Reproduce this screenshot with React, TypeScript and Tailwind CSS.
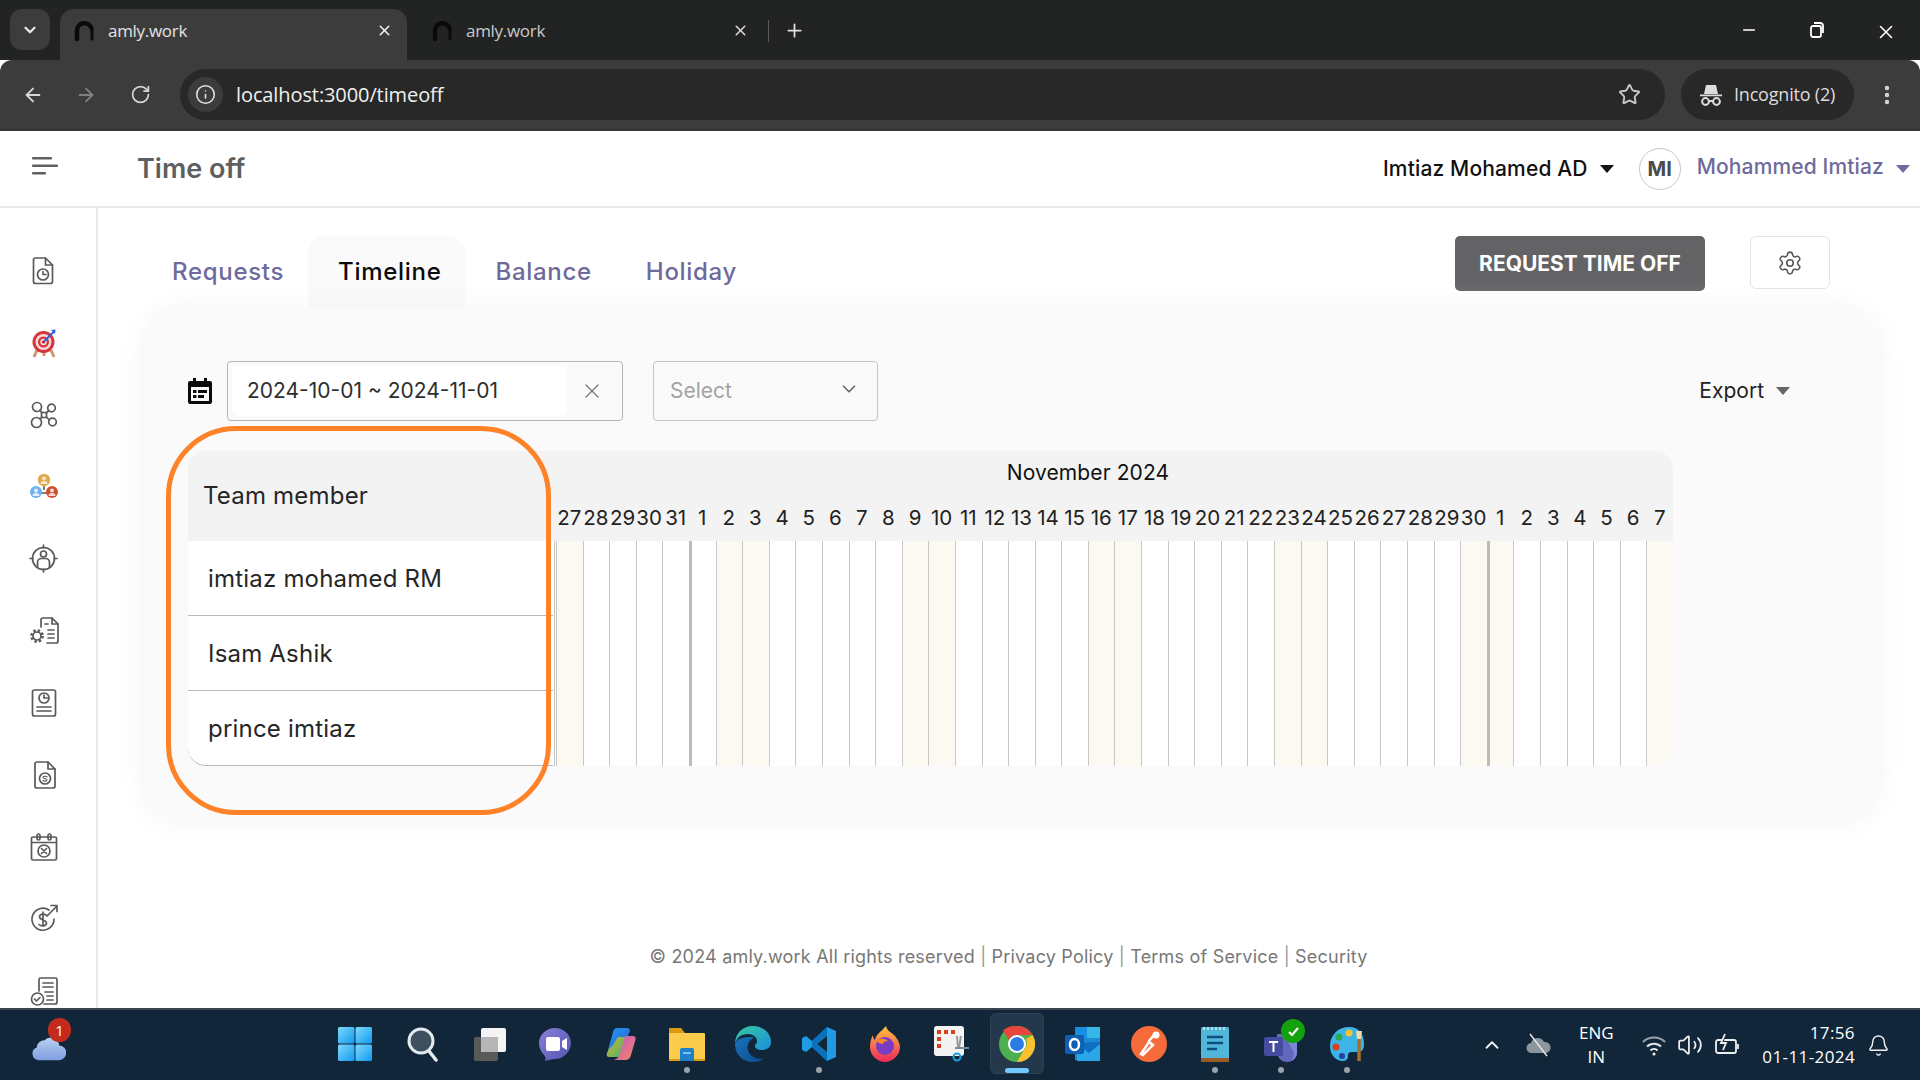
import React from "react";
import { ArrowLeft, ArrowRight, RotateCw, Info, Star, EllipsisVertical, Minus, X, Plus, ChevronDown, ChevronUp, Settings, Bell, Volume2 } from "lucide-react";

const Favicon = () => (
  <svg width="24" height="24" viewBox="0 0 24 24" fill="none">
    <path d="M5 20V11.500a7.500 7.500 0 0 1 14.500-2.500" stroke="#0a0a0a" strokeWidth="4.500" strokeLinecap="round" />
    <path d="M20 10v10" stroke="#0a0a0a" strokeWidth="3" strokeLinecap="round" />
  </svg>
);

const Ic = ({ children }: { children: React.ReactNode }) => (
  <svg width="34" height="34" viewBox="0 0 34 34" fill="none" stroke="#5a5a5a" strokeWidth="1.7" strokeLinecap="round" strokeLinejoin="round" className="shrink-0">
    {children}
  </svg>
);

const sidebarIcons = [
  <Ic key="a"><path d="M8.500 4h10l7 7v16.500a2 2 0 0 1-2 2h-15a2 2 0 0 1-2-2V6a2 2 0 0 1 2-2z" /><path d="M18.500 4v7h7" /><circle cx="16" cy="20.500" r="5.500" /><path d="M16 17.500v3h3" /></Ic>,
  <svg key="b" width="34" height="34" viewBox="0 0 34 34" fill="none" className="shrink-0">
    <path d="M10 24l-3 7M24 24l3 7M17 25v5" stroke="#c99a72" strokeWidth="3" />
    <circle cx="16.500" cy="16" r="11" fill="#d8353a" />
    <circle cx="16.500" cy="16" r="8" fill="#f5dcdc" />
    <circle cx="16.500" cy="16" r="5.500" fill="#d8353a" />
    <circle cx="16.500" cy="16" r="3.200" fill="#f5dcdc" />
    <circle cx="16.500" cy="16" r="1.500" fill="#c21d2a" />
    <path d="M17 15.500L27 5.500" stroke="#2e5fd8" strokeWidth="2" />
    <path d="M24 4l4.500-.500L28 8z" fill="#2e5fd8" />
  </svg>,
  <Ic key="c"><circle cx="10" cy="9" r="4.500" /><circle cx="24.500" cy="10" r="3.800" /><circle cx="9.500" cy="24.500" r="5" /><circle cx="25.500" cy="24" r="3.800" /><rect x="14.500" y="14.500" width="5" height="5" /><path d="M13 12l2 3M22 12.500l-3 2.500M13 21l2-2M22.500 22l-3-3" /></Ic>,
  <svg key="d" width="34" height="34" viewBox="0 0 34 34" fill="none" className="shrink-0">
    <path d="M17 14v6M9 23h16" stroke="#555" strokeWidth="1.500" />
    <circle cx="17" cy="10" r="6.200" fill="#e2a94e" />
    <circle cx="9" cy="22" r="6" fill="#6eb4ee" />
    <circle cx="25" cy="22" r="6" fill="#cf5030" />
    <circle cx="17" cy="8.500" r="2" fill="#f3e6cf" /><path d="M13.500 14a3.500 3 0 0 1 7 0z" fill="#f3e6cf" />
    <circle cx="9" cy="20.500" r="2" fill="#e5f0fa" /><path d="M5.500 26a3.500 3 0 0 1 7 0z" fill="#e5f0fa" />
    <circle cx="25" cy="20.500" r="2" fill="#f3dcd4" /><path d="M21.500 26a3.500 3 0 0 1 7 0z" fill="#f3dcd4" />
  </svg>,
  <Ic key="e"><circle cx="16.500" cy="16.500" r="11" /><path d="M16.500 3v3M16.500 27v3M3 16.500h3M27 16.500h3" /><circle cx="16.500" cy="12" r="3" /><path d="M10.500 25v-4.500a4 4 0 0 1 4-4h4a4 4 0 0 1 4 4V25" /></Ic>,
  <Ic key="f"><path d="M14 13V6a2 2 0 0 1 2-2h9l6 6v17a2 2 0 0 1-2 2h-9" /><path d="M25 4v6h6M18 10h3M21 16h6M21 20h6M21 24h6" /><circle cx="10" cy="22" r="4" /><circle cx="10" cy="22" r="5.600" strokeWidth="2.600" strokeDasharray="2.400 2" strokeLinecap="butt" /></Ic>,
  <Ic key="g"><rect x="5.500" y="4" width="23" height="26" rx="2" /><circle cx="17" cy="12" r="5" /><path d="M17 12V9M17 12h3.500M10 21h14M10 25h14" /></Ic>,
  <Ic key="h"><path d="M10 4h11l7 7v17a2 2 0 0 1-2 2H10a2 2 0 0 1-2-2V6a2 2 0 0 1 2-2z" /><path d="M21 4v7h7" /><circle cx="18" cy="20.500" r="5.500" /><path d="M20 18.800c-1-.800-4-.800-4 .7s4 .9 4 2.400-3 1.500-4 .6" strokeWidth="1.100" /></Ic>,
  <Ic key="i"><rect x="4.500" y="7" width="25" height="23" rx="1.500" /><path d="M4.500 12.500h25" /><rect x="10" y="4" width="3" height="6" rx="1.500" /><rect x="21" y="4" width="3" height="6" rx="1.500" /><circle cx="17" cy="21" r="6" /><path d="M14.500 18.500l5 5M19.500 18.500l-5 5" /></Ic>,
  <Ic key="j"><path d="M22 8a11 11 0 1 0 5 9" /><path d="M20 14L30 4M24 3.500h6v6" /><path d="M19.500 13.500c-1.500-2-7-2-7 1.500s7 2.500 7 6-5.500 3.500-7.500 1.500M16 10v14" /></Ic>,
  <Ic key="k"><path d="M12 17V5.500a1.500 1.500 0 0 1 1.500-1.500h15A1.500 1.500 0 0 1 30 5.500V28a2 2 0 0 1-2 2H17" /><path d="M16 9h10M16 13h10M18 18h8M20 22h6M20 26h6" /><circle cx="10.500" cy="25" r="6" /><path d="M7.500 25l2 2 3.500-3.500" /></Ic>,
];

const Grad = ({ id, a, b, x2 = 1, y2 = 1 }: { id: string; a: string; b: string; x2?: number; y2?: number }) => (
  <defs>
    <linearGradient id={id} x1="0" y1="0" x2={x2} y2={y2}>
      <stop offset="0" stopColor={a} />
      <stop offset="1" stopColor={b} />
    </linearGradient>
  </defs>
);

const Ti = ({ children }: { children: React.ReactNode }) => (
  <svg width="36" height="36" viewBox="0 0 36 36" fill="none">{children}</svg>
);

type Task = { icon: React.ReactNode; dot?: boolean; active?: boolean; badge?: boolean };

const tasks: Task[] = [
  { icon: <Ti><Grad id="w" a="#7fd8fb" b="#0f9af0" /><rect x="1" y="1" width="16.500" height="16.500" rx="1.500" fill="url(#w)" /><rect x="18.500" y="1" width="16.500" height="16.500" rx="1.500" fill="url(#w)" /><rect x="1" y="18.500" width="16.500" height="16.500" rx="1.500" fill="url(#w)" /><rect x="18.500" y="18.500" width="16.500" height="16.500" rx="1.500" fill="url(#w)" /></Ti> },
  { icon: <Ti><circle cx="16" cy="15" r="12" fill="#3c5060" stroke="#e4e9ec" strokeWidth="3" /><path d="M24 25l7 9" stroke="#e4e9ec" strokeWidth="3.500" strokeLinecap="round" /></Ti> },
  { icon: <Ti><rect x="3" y="11" width="24" height="24" rx="2" fill="#5a5a5a" /><rect x="10" y="2" width="25" height="24" rx="2" fill="#f4f4f4" /><rect x="10" y="11" width="17" height="15" fill="#b6b6b6" /></Ti> },
  { icon: <Ti><Grad id="m" a="#8b7fd6" b="#4f56b5" /><path d="M18 2c9 0 16 7 16 15s-7 16-16 16c-3 0-7 1-10 2 1-3 .5-4-1-6-3-3-5-7-5-12C2 9 9 2 18 2z" fill="url(#m)" /><rect x="9" y="11" width="14" height="14" rx="2" fill="#fff" /><path d="M25 15l5-3v12l-5-3z" fill="#fff" /></Ti> },
  { icon: <Ti><Grad id="c1" a="#1a9ae8" b="#3b5fe0" /><Grad id="c2" a="#f2b21e" b="#36b37e" /><Grad id="c3" a="#c24fd6" b="#f58a5a" /><path d="M14 2h9c2 0 3 2 2.500 3.500L20 27c-.5 2-2 4-5 4H6c-2 0-3-2-2-4z" fill="url(#c2)" /><path d="M14 2h10c2 0 3 1 3 3l-3 6h-9l-5 8-5 5 5-18c.5-2 2-4 4-4z" fill="url(#c1)" /><path d="M24 10h6c2 0 3 1.500 2.500 3.500L28 29c-.5 3-3 5-6 5H11c3-1 5-3 6-6l4-14c.5-2 1.500-4 3-4z" fill="url(#c3)" /></Ti> },
  { dot: true, icon: <Ti><path d="M0 3a1 1 0 0 1 1-1h11l4 5h19v4H0z" fill="#d99a10" /><rect x="0" y="7" width="36" height="28" rx="1" fill="#fbcb4c" /><path d="M0 33h36v2H0z" fill="#d99a10" /><path d="M11 35V24a2 2 0 0 1 2-2h10a2 2 0 0 1 2 2v11z" fill="#1d80c8" /><path d="M14 27h8" stroke="#a9d6f5" strokeWidth="1.500" /></Ti> },
  { icon: <Ti><Grad id="e1" a="#35c9a0" b="#1a8fdc" /><Grad id="e2" a="#1773bd" b="#0d4a8c" /><path d="M18 0c10 0 18 7 18 16 0 6-5 8-9 8-5 0-7-2-7-4 0-2 2-2 2-5 0-4-4-7-9-7C6 8 1 12 0 18 0 8 7 0 18 0z" fill="url(#e1)" /><path d="M0 18c0 10 7 18 18 18 4 0 8-1 11-4-2 1-5 1-7 .5-6-1.500-10-6.500-9.500-12 .3-4 3-7 6.500-9-1-.3-2-.5-3.500-.5C7 11 1 13 0 18z" fill="url(#e2)" /></Ti> },
  { dot: true, icon: <Ti><path d="M26 1l9 4v26l-9 4L11 21l-6 5-4-2V12l4-2 6 5z" fill="#1f9be3" /><path d="M26 1v34L11 21v-6zM26 10L15.500 18 26 26z" fill="#0a72bd" /><path d="M26 10v16l-10-8z" fill="#12263a" /></Ti> },
  { icon: <Ti><Grad id="f1" a="#ffc23d" b="#f0285a" x2={0} /><path d="M19 0c1 5 5 6 8 9 4 4 6 9 6 12 0 8-7 15-15 15S3 29 3 21c0-4 1-9 3-12 0 3 1 4 2 5 1-6 6-8 11-14z" fill="url(#f1)" /><circle cx="18" cy="20" r="9" fill="#7b3cc4" /><path d="M10 15c3-3 8-3 11 0-3 0-5 1-5 3-3 0-4-1-6-3z" fill="#f58a2a" /></Ti> },
  { icon: <Ti><rect x="1" y="0" width="30" height="30" rx="3" fill="#f3f3f3" /><path d="M4 4h4v4H4zM11 4h4v4h-4zM18 4h4v4h-4zM4 11h4v4H4zM4 18h4v4H4z" fill="#d8401f" /><path d="M24 10l1 12M28 10l-2 12" stroke="#9a9a9a" strokeWidth="2" /><circle cx="24" cy="31" r="3.500" stroke="#1aa0e0" strokeWidth="2" /><path d="M22 22h15" stroke="#7a8a96" strokeWidth="2" /></Ti> },
  { active: true, icon: <Ti><circle cx="18" cy="18" r="18" fill="#4caf50" /><path d="M18 0a18 18 0 0 1 15.600 9H18a9 9 0 0 0-8 5L4 4.500A18 18 0 0 1 18 0z" fill="#e8453c" /><path d="M33.600 9A18 18 0 0 1 18 36l7.800-13.500A9 9 0 0 0 27 13z" fill="#fbc02d" /><circle cx="18" cy="18" r="9" fill="#fff" /><circle cx="18" cy="18" r="7" fill="#2c7be5" /></Ti> },
  { icon: <Ti><path d="M10 1h24a1 1 0 0 1 1 1v32H10z" fill="#1d8ad6" /><path d="M22 1h13v11H22z" fill="#35b8e8" /><path d="M10 1h12v11H10z" fill="#1490df" /><path d="M12 17l23-1v19H12z" fill="#0f6fc0" /><path d="M12 18l12 9 11-9v17H12z" fill="#28a8ea" /><rect x="0" y="9" width="19" height="19" rx="2" fill="#0f5fb5" /><ellipse cx="9.500" cy="18.500" rx="4.500" ry="5.500" stroke="#fff" strokeWidth="2.500" /></Ti> },
  { icon: <Ti><circle cx="18" cy="18" r="18" fill="#f56b39" /><path d="M10 28l8-12 4 3-10 10zM18 15l5-6" stroke="#fff" strokeWidth="2.500" strokeLinecap="round" /><circle cx="25" cy="9" r="3.500" fill="#fff" /></Ti> },
  { dot: true, icon: <Ti><rect x="4" y="1" width="28" height="33" rx="1.500" fill="#52b6d8" /><path d="M4 32h28v4H4z" fill="#9a5a2a" /><path d="M7 1v3M11 1v3M15 1v3M19 1v3M23 1v3M27 1v3" stroke="#c9eef9" strokeWidth="1.500" /><path d="M10 11h16M10 17h16M10 23h10" stroke="#0d4f78" strokeWidth="2.400" /></Ti> },
  { dot: true, badge: true, icon: <Ti><circle cx="25" cy="6" r="5" fill="#6a70c8" /><path d="M14 8h16c3 0 4 2 4 4v14c0 5-4 10-10 10s-10-5-10-10z" fill="#6268bc" /><path d="M20 8h10a4 4 0 0 1 4 4v14c0 5-3 8-6 9 3-3 3-6 3-9z" fill="#7f85d8" /><rect x="1" y="11" width="19" height="19" rx="2" fill="#454b9e" /><path d="M6 16h9M10.500 16v10" stroke="#fff" strokeWidth="2" /></Ti> },
  { dot: true, icon: <Ti><path d="M20 1C9 1 1 9 1 20c0 9 6 15 13 15 4 0 5-3 5-5 0-3 1-4 4-4h6c5 0 6-4 6-8C35 8 30 1 20 1z" fill="#3cb4e8" /><circle cx="20" cy="7" r="3.500" fill="#f4c430" /><circle cx="10" cy="11" r="3.500" fill="#2fa84f" /><circle cx="7" cy="21" r="3.500" fill="#d8401f" /><circle cx="13" cy="30" r="3" fill="#2c3e9e" /><path d="M30 12v23" stroke="#a5702a" strokeWidth="3.500" /><path d="M27 5h6l-1 8h-4z" fill="#ecdcae" /></Ti> },
];

const days = [27, 28, 29, 30, 31, ...Array.from({ length: 30 }, (_, i) => i + 1), 1, 2, 3, 4, 5, 6, 7];
const members = ["imtiaz mohamed RM", "Isam Ashik", "prince imtiaz"];

const Caret = ({ className }: { className: string }) => (
  <span className={`inline-block w-0 h-0 border-l-[7px] border-r-[7px] border-t-[8px] border-l-transparent border-r-transparent ${className}`} />
);

export default function App() {
  return (
    <div className="w-[1920px] h-[1080px] overflow-hidden flex flex-col bg-white font-['Inter',sans-serif]">
      {/* tab strip */}
      <div className="h-[60px] shrink-0 bg-[#222423] flex items-end pl-[10px] text-[#e3e3e3] font-['Open_Sans',sans-serif] text-[17px]">
        <div className="w-[40px] h-[41px] mb-[10px] rounded-xl bg-[#3c3c3c] flex items-center justify-center">
          <ChevronDown size={18} strokeWidth={3} color="#e8e8e8" />
        </div>
        <div className="ml-[10px] w-[347px] h-[51px] pb-[8px] bg-[#3c3c3c] rounded-t-[14px] flex items-center pl-[12px] pr-[14px]">
          <Favicon />
          <span className="ml-[12px] flex-1 tracking-[-0.3px]">amly.work</span>
          <X size={17} strokeWidth={2.200} color="#f0f0f0" />
        </div>
        <div className="w-[361px] h-[51px] pb-[8px] flex items-center pl-[23px] pr-[19px] text-[#c9c9c9]">
          <Favicon />
          <span className="ml-[12px] flex-1 tracking-[-0.3px]">amly.work</span>
          <X size={17} strokeWidth={2.200} color="#d8d8d8" />
        </div>
        <div className="h-[51px] pb-[8px] flex items-center">
          <div className="w-px h-[22px] bg-[#5a5a5a]" />
          <Plus size={21} strokeWidth={2} color="#e0e0e0" className="ml-[15px]" />
        </div>
        <div className="ml-auto h-full flex items-start pt-[21px]">
          <div className="w-[68px] flex justify-center pr-[2px]"><Minus size={18} color="#fff" strokeWidth={2.200} /></div>
          <div className="w-[68px] flex justify-center pr-[2px]">
            <svg width="18" height="18" viewBox="0 0 18 18" fill="none" stroke="#fff" strokeWidth="1.800"><rect x="3" y="5" width="10" height="11" rx="2" /><path d="M6 2h6a3 3 0 0 1 3 3v7" /></svg>
          </div>
          <div className="w-[68px] flex justify-center"><X size={22} color="#fff" strokeWidth={1.700} /></div>
        </div>
      </div>
      {/* toolbar */}
      <div className="h-[71px] shrink-0 bg-[#3c3c3c] border-b-2 border-[#343434] rounded-tl-xl rounded-tr-xl flex items-center pl-[22px] pr-[18px] font-['Open_Sans',sans-serif]">
        <ArrowLeft size={22} color="#d6d6d6" strokeWidth={2} />
        <ArrowRight size={22} color="#808080" strokeWidth={2} className="ml-[31px]" />
        <RotateCw size={21} color="#d6d6d6" strokeWidth={2} className="ml-[33px]" />
        <div className="ml-[29px] w-[1485px] h-[51px] rounded-full bg-[#282828] flex items-center pl-[8px] pr-[24px]">
          <div className="w-[35px] h-[35px] rounded-full bg-[#3c3c3c] flex items-center justify-center">
            <Info size={21} color="#e3e3e3" strokeWidth={1.800} />
          </div>
          <span className="ml-[13px] flex-1 text-[20px] text-[#f0f0f0] tracking-[-0.1px]">localhost:3000/timeoff</span>
          <Star size={23} color="#c8c8c8" strokeWidth={2} />
        </div>
        <div className="ml-[16px] w-[173px] h-[51px] rounded-full bg-[#282828] flex items-center pl-[18px]">
          <svg width="24" height="24" viewBox="0 0 24 24" fill="#dcdcdc" className="shrink-0"><path d="M7 2h10l2 9H5zM1 11.500h22v1.800H1z" /><circle cx="6.500" cy="18.500" r="3.400" fill="none" stroke="#dcdcdc" strokeWidth="2" /><circle cx="17.500" cy="18.500" r="3.400" fill="none" stroke="#dcdcdc" strokeWidth="2" /><path d="M10 18h4" stroke="#dcdcdc" strokeWidth="2" /></svg>
          <span className="ml-[11px] text-[18px] text-[#dcdcdc] tracking-[-0.2px] whitespace-nowrap">Incognito (2)</span>
        </div>
        <EllipsisVertical size={24} color="#d6d6d6" strokeWidth={2.400} className="ml-[21px]" />
      </div>
      {/* header */}
      <div className="h-[77px] shrink-0 border-b-2 border-[#e9e9e9] flex items-center pl-[32px]">
        <svg width="26" height="24" viewBox="0 0 26 24" fill="#606060" className="-mt-[6px]"><rect x="0" y="3" width="20" height="2.600" rx="1" /><rect x="0" y="10.500" width="26" height="2.600" rx="1" /><rect x="0" y="18" width="14" height="2.600" rx="1" /></svg>
        <span className="ml-[79px] mt-[1px] text-[27px] font-semibold text-[#5f5f5f]">Time off</span>
        <span className="ml-auto text-[21px] font-medium text-[#111] tracking-[0.15px]">Imtiaz Mohamed AD</span>
        <Caret className="ml-[12px] border-t-[#111]" />
        <div className="ml-[25px] w-[42px] h-[42px] rounded-full border border-[#c9c9c9] flex items-center justify-center text-[20px] font-bold text-[#4a4a4a]">MI</div>
        <span className="ml-[16px] -mt-[4px] text-[21px] font-medium text-[#6e6a9c] tracking-[0.15px]">Mohammed Imtiaz</span>
        <Caret className="ml-[12px] mr-[10px] border-t-[#6e6a9c]" />
      </div>
      {/* body */}
      <div className="flex-1 min-h-0 flex">
        <div className="w-[98px] shrink-0 border-r-2 border-[#e9e9e9] overflow-hidden flex flex-col items-center gap-[38px] pt-[46px] pr-[9px]">
          {sidebarIcons}
        </div>
        <div className="flex-1 min-w-0 flex flex-col pt-[28px] pl-[45px] pr-[40px]">
          <div className="h-[72px] shrink-0 flex">
            <div className="flex text-[24px] font-medium tracking-[0.7px] text-[#6e6a9c] pl-[29px]">
              <div className="pr-[24px] h-full flex items-center">Requests</div>
              <div className="pl-[30px] pr-[25px] h-full flex items-center bg-[#fafafa] rounded-t-[18px] text-[#0a0a0a]">Timeline</div>
              <div className="pl-[29px] pr-[25px] h-full flex items-center">Balance</div>
              <div className="pl-[29px] pr-[25px] h-full flex items-center">Holiday</div>
            </div>
            <div className="ml-auto flex items-start pr-[50px]">
              <button className="w-[250px] h-[55px] rounded-[5px] bg-[#636365] text-white text-[21px] font-bold">REQUEST TIME OFF</button>
              <button className="ml-[45px] w-[80px] h-[53px] rounded-[6px] border border-[#e4e4e4] flex items-center justify-center">
                <Settings size={26} color="#5a5a5a" strokeWidth={1.500} />
              </button>
            </div>
          </div>
          <div className="h-[514px] shrink-0 rounded-[40px] bg-[#fafafa] shadow-[0_0_24px_rgba(240,240,240,0.8)] pt-[53px] pl-[45px]">
            <div className="h-[60px] flex items-center pr-[90px]">
              <svg width="24" height="26" viewBox="0 0 24 26" fill="#0b0b0b" className="shrink-0"><path d="M5 0h3v3h8V0h3v3h3a2 2 0 0 1 2 2v19a2 2 0 0 1-2 2H2a2 2 0 0 1-2-2V5a2 2 0 0 1 2-2h3z" /><rect x="3" y="9" width="18" height="14" fill="#fafafa" /><rect x="5" y="12" width="3.500" height="3" /><rect x="10" y="12" width="9" height="3" /><rect x="5" y="17" width="3.500" height="3" /><rect x="10" y="17" width="6" height="3" /></svg>
              <div className="ml-[15px] w-[396px] h-[60px] rounded-[4px] border border-[#b5b5b5] flex items-center pl-[4px]">
                <div className="w-[334px] h-[50px] bg-white rounded-[6px] flex items-center pl-[15px] text-[21px] text-[#2e2e2e] whitespace-nowrap">2024-10-01 ~ 2024-11-01</div>
                <X size={24} color="#777" strokeWidth={1.300} className="ml-[14px]" />
              </div>
              <div className="ml-[30px] w-[225px] h-[60px] rounded-[4px] border border-[#c4c4c4] flex items-center justify-between pl-[16px] pr-[17px] text-[21px] text-[#a3a3a3]">
                <span>Select</span>
                <ChevronDown size={22} color="#666" strokeWidth={1.800} className="-mt-[4px]" />
              </div>
              <span className="ml-auto text-[21px] text-[#222]">Export</span>
              <Caret className="ml-[12px] border-t-[#666]" />
            </div>
            <div className="mt-[30px] relative w-[1485px] flex">
              <div className="w-[365px] shrink-0">
                <div className="h-[90px] bg-[#f3f3f3] rounded-tl-[18px] flex items-center pl-[15px] text-[24px] tracking-[0.2px] text-[#262626]">Team member</div>
                {members.map((m, i) => (
                  <div key={m} className={`h-[75px] pt-[2px] bg-white border-b border-[#b9b9b9] flex items-center pl-[20px] text-[24px] tracking-[0.2px] text-[#262626] ${i === 2 ? "rounded-bl-[18px]" : ""}`}>{m}</div>
                ))}
              </div>
              <div className="flex-1 min-w-0 flex flex-col">
                <div className="h-[90px] bg-[#f3f3f3] rounded-tr-[18px] flex flex-col">
                  <div className="h-[37px] flex items-end justify-center pr-[50px] text-[21px] tracking-[0.1px] text-[#111]">November 2024</div>
                  <div className="mt-[15px] grid grid-cols-[repeat(42,minmax(0,1fr))] pl-[3px] text-[20.500px] leading-[30px] text-[#222] text-center">
                    {days.map((d, i) => <div key={i} className="whitespace-nowrap flex justify-center">{d}</div>)}
                  </div>
                </div>
                <div className="h-[225px] bg-white rounded-br-[18px] overflow-hidden pl-px">
                  <div className="h-full border-l border-[#c4c4c4] pl-px grid grid-cols-[repeat(42,minmax(0,1fr))]">
                    {days.map((_, i) => (
                      <div key={i} className={`${i % 7 === 0 || i % 7 === 6 ? "bg-[#fcf9f2]" : ""} ${i === 5 || i === 35 ? "border-l-[3px] border-[#bcbcbc]" : "border-l border-[#c8c8c8]"}`} />
                    ))}
                  </div>
                </div>
              </div>
              <div className="absolute -left-[22px] -top-[25px] w-[385px] h-[389px] rounded-[70px] border-[5px] border-[#ff8228] pointer-events-none" />
            </div>
          </div>
          <div className="mt-[121px] pr-[6px] text-center text-[18px] tracking-[0.2px] leading-[28px] text-[#777]">
            © 2024 amly.work All rights reserved <span className="text-[#999]">|</span> Privacy Policy <span className="text-[#999]">|</span> Terms of Service <span className="text-[#999]">|</span> Security
          </div>
        </div>
      </div>
      {/* taskbar */}
      <div className="h-[72px] shrink-0 bg-[#12263a] border-t-2 border-[#3a4650] flex font-['Open_Sans',sans-serif] text-white">
        <div className="w-[322px] shrink-0 pl-[30px] pt-[8px]">
          <div className="relative w-[42px] h-[43px]">
            <svg width="36" height="26" viewBox="0 0 38 30" className="absolute left-0 bottom-0">
              <Grad id="cl" a="#b7cff2" b="#7f9fe0" x2={0} />
              <path d="M8 29a7.500 7.500 0 0 1-2-14.500A9 9 0 0 1 15 6a10 10 0 0 1 17 6 8.500 8.500 0 0 1-1 17z" fill="url(#cl)" />
            </svg>
            <div className="absolute left-[18px] top-0 w-[23px] h-[24px] rounded-full bg-[#c42b1c] flex items-center justify-center text-[15px]">1</div>
          </div>
        </div>
        <div className="flex">
          {tasks.map((t, i) => (
            <div key={i} className={`${i === 0 ? "w-[68px] pr-[2px]" : "w-[66px]"} h-full relative flex justify-center pt-[16px]`}>
              {t.active && <div className="absolute left-[6px] top-[3px] w-[54px] h-[61px] rounded-[6px] bg-[#25384b] border border-[#2e4254]" />}
              <div className="relative">{t.icon}</div>
              {t.dot && <div className="absolute left-[30px] top-[57px] w-[6px] h-[6px] rounded-full bg-[#9aa3aa]" />}
              {t.active && <div className="absolute left-[21px] top-[58px] w-[24px] h-[5px] rounded-full bg-[#6fc8ff]" />}
              {t.badge && (
                <div className="absolute left-[33px] top-[9px] w-[24px] h-[24px] rounded-full bg-[#13a10e] flex items-center justify-center">
                  <svg width="13" height="13" viewBox="0 0 13 13" fill="none" stroke="#fff" strokeWidth="2"><path d="M2 7l3 3 6-7" /></svg>
                </div>
              )}
            </div>
          ))}
        </div>
        <div className="ml-auto flex items-center pr-[30px]">
          <ChevronUp size={22} strokeWidth={2} color="#f0f0f0" />
          <svg width="28" height="26" viewBox="0 0 28 26" fill="#8d969c" className="ml-[22px]"><path d="M7 21a5 5 0 0 1-1-10 7 7 0 0 1 13-1 5.500 5.500 0 0 1 2 11z" /><path d="M5 2l17 22" stroke="#e6e6e6" strokeWidth="1.500" /></svg>
          <div className="ml-[19px] w-[48px] text-center text-[17px] leading-[24px]">ENG<br />IN</div>
          <svg width="26" height="26" viewBox="0 0 26 26" fill="none" stroke="#9aa3aa" strokeWidth="2" className="ml-[21px]"><path d="M2 10a16 16 0 0 1 22 0" /><path d="M6 14.500a10 10 0 0 1 14 0" stroke="#dfe3e6" /><path d="M9.500 18.500a5 5 0 0 1 7 0" stroke="#f0f0f0" /><circle cx="13" cy="22" r="1.500" fill="#f0f0f0" stroke="none" /></svg>
          <Volume2 size={26} strokeWidth={1.600} color="#f0f0f0" className="ml-[10px]" />
          <svg width="26" height="26" viewBox="0 0 26 26" fill="none" stroke="#f0f0f0" strokeWidth="1.800" className="ml-[11px]"><rect x="2" y="8" width="20" height="13" rx="2" /><path d="M24 12v5" /><path d="M11 2L7 11h5l-3 7" fill="#12263a" /></svg>
          <div className="ml-[22px] text-right text-[17px] tracking-[0.4px] leading-[24px]">17:56<br />01-11-2024</div>
          <Bell size={23} strokeWidth={1.500} color="#f0f0f0" className="ml-[12px]" />
        </div>
      </div>
    </div>
  );
}
